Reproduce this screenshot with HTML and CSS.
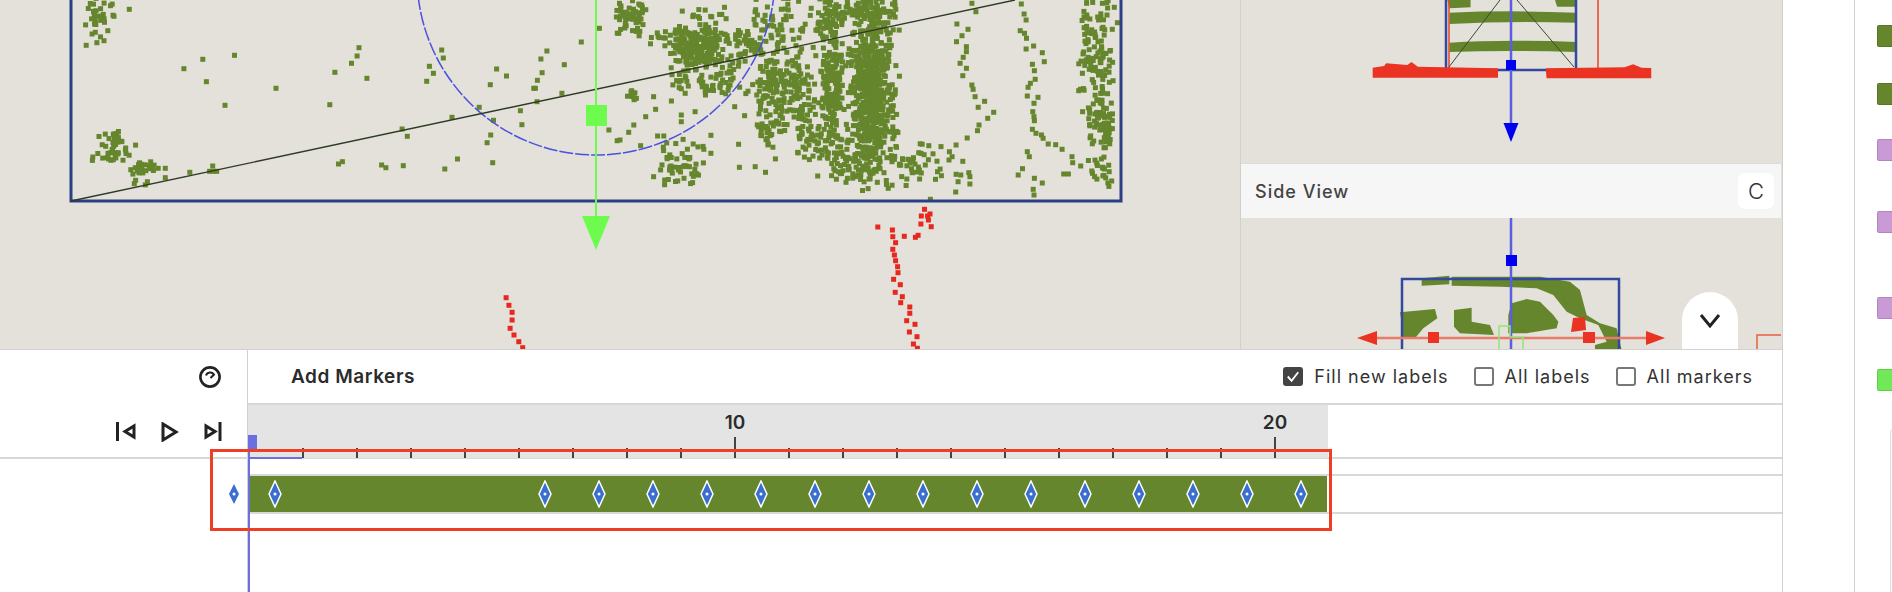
FILE: index.html
```html
<!DOCTYPE html>
<html lang="en">
<head>
  <meta charset="UTF-8" />
  <title>Label Editor</title>
  <link rel="stylesheet" href="styles.css">
</head>
<body>
  <div id="page">
    <div id="editor">
      <!-- 3D views -->
      <div id="views">
        <svg id="main-view" viewBox="0 0 1240 349" width="1240" height="349">
          <g id="main-dots"></g>
          <circle cx="596" cy="-24" r="179" fill="none" stroke="#4a50e0" stroke-width="1.5" stroke-dasharray="14 2"/>
          <rect x="71" y="-10" width="1050" height="211" fill="none" stroke="#2b3f85" stroke-width="3"/>
          <line x1="71" y1="201" x2="1015" y2="0" stroke="#2f3a24" stroke-width="1.4"/>
          <line x1="596" y1="0" x2="596" y2="218" stroke="#6dfb4e" stroke-width="2"/>
          <rect x="586" y="105" width="21" height="21" fill="#6dfb4e"/>
          <polygon points="582,216 610,216 596,250" fill="#6dfb4e"/>
        </svg>
        <div id="side-panel">
          <svg viewBox="1241 0 541 163" width="541" height="163">
            <g transform="translate(1230 0) scale(.4221 .3333)" fill="#65862c">
              <path d="M515 0H570V22L520 25ZM770 0H822V20L775 20Z"/>
              <path d="M520 38Q660 30 820 38V68Q660 62 520 72Z"/>
              <path d="M520 128Q650 118 820 126V156Q660 150 520 156Z"/>
            </g>
            <line x1="1449" y1="0" x2="1449" y2="68" stroke="#e8452c" stroke-width="1.5"/>
            <line x1="1598" y1="0" x2="1598" y2="68" stroke="#e8452c" stroke-width="1.5"/>
            <rect x="1446" y="-5" width="130" height="75" fill="none" stroke="#33489f" stroke-width="2.5"/>
            <line x1="1500" y1="0" x2="1449" y2="67" stroke="#3a4a30" stroke-width="1"/>
            <line x1="1517" y1="0" x2="1574" y2="67" stroke="#3a4a30" stroke-width="1"/>
            <g transform="translate(1230 0) scale(.4221 .3333)" fill="#ea3323">
              <path d="M338 203L365 198L370 190L420 195L430 186L445 200L635 205V233L338 233Z"/>
              <path d="M748 205L935 202L955 193L975 203L998 204V235L750 235Z"/>
            </g>
            <line x1="1511" y1="0" x2="1511" y2="125" stroke="#5a5fe0" stroke-width="2.5"/>
            <rect x="1506" y="60" width="10" height="10" fill="#0000f0"/>
            <polygon points="1503.5,123 1518.5,123 1511,142" fill="#0000f0"/>
          </svg>
          <div id="side-header">
            <span class="view-title">Side View</span>
            <span class="key-cap">C</span>
          </div>
          <svg viewBox="1241 218 541 131" width="541" height="131">
            <g transform="translate(1340 225) scale(.3333)" fill="#65862c">
              <path d="M245 160L328 152V178L245 182Z"/>
              <path d="M335 155L600 155L690 170L720 195L740 270L780 295L830 310L845 375H765V360L800 350L775 300L720 280L680 260L640 210L590 190L480 185L335 182Z"/>
              <path d="M505 270L515 235L560 222L600 230L640 270L655 290L650 310L560 325L505 325Z"/>
              <path d="M180 262L285 252L292 280L250 310L225 340L190 342L185 290Z"/>
              <path d="M342 255L395 248V290L450 300L462 330L360 325L342 305Z"/>
            </g>
            <rect x="1402" y="279" width="217" height="90" fill="none" stroke="#33489f" stroke-width="2.5"/>
            <line x1="1511" y1="218" x2="1511" y2="350" stroke="#5a5fe0" stroke-width="2.5"/>
            <rect x="1506" y="255" width="11" height="11" fill="#0000f0"/>
            <line x1="1375" y1="338" x2="1648" y2="338" stroke="#ea7a6a" stroke-width="2.5"/>
            <polygon points="1357,338 1377,331 1377,345" fill="#ea3323"/>
            <polygon points="1665,338 1646,331 1646,345" fill="#ea3323"/>
            <rect x="1428" y="332" width="11" height="11" fill="#ea3323"/>
            <rect x="1583" y="332" width="12" height="11" fill="#ea3323"/>
            <path d="M1573 318L1585 317L1586 330L1571 332Z" fill="#ea3323"/>
            <path d="M1499 326H1510V337H1523V350H1499Z" fill="none" stroke="#8fe87a" stroke-width="1.5"/>
            <path d="M1781 335H1757V350" fill="none" stroke="#e8603f" stroke-width="1.5"/>
          </svg>
          <button id="collapse-btn">
            <svg viewBox="0 0 24 16" width="24" height="16"><path d="M3 2L12 13L21 2" fill="none" stroke="#222" stroke-width="3"/></svg>
          </button>
        </div>
      </div>

      <!-- Timeline -->
      <div id="timeline">
        <div id="timeline-head">
          <div class="speed-row">
            <svg viewBox="0 0 24 24" width="24" height="24">
              <circle cx="12" cy="12" r="9.6" fill="none" stroke="#222" stroke-width="2.6"/>
              <path d="M8 10.5A4.5 4.5 0 0 1 16 9.5L12.5 13" fill="none" stroke="#222" stroke-width="2"/>
            </svg>
          </div>
          <div class="transport-row">
            <svg viewBox="0 0 20 20" width="20" height="20"><path d="M1.5 0V19" stroke="#222" stroke-width="3"/><path d="M18 4V15L9 9.500Z" fill="none" stroke="#222" stroke-width="3"/></svg>
            <svg viewBox="0 0 18 20" width="18" height="20"><path d="M2 2V18L15 10Z" fill="none" stroke="#222" stroke-width="3"/></svg>
            <svg viewBox="0 0 18 20" width="18" height="20"><path d="M2 4V15L11 9.500Z" fill="none" stroke="#222" stroke-width="3"/><path d="M16 0V19" stroke="#222" stroke-width="3"/></svg>
          </div>
        </div>
        <div id="timeline-body">
          <div id="marker-bar">
            <span class="bar-title">Add Markers</span>
            <div class="bar-options">
              <label class="opt"><span class="box checked"><svg viewBox="0 0 20 20" width="20" height="19"><path d="M4.500 10L8.500 14.500L15.500 5.500" fill="none" stroke="#fff" stroke-width="2"/></svg></span>Fill new labels</label>
              <label class="opt"><span class="box"></span>All labels</label>
              <label class="opt"><span class="box"></span>All markers</label>
            </div>
          </div>
          <div id="ruler-row"><div id="ruler"></div></div>
          <div id="track-row"><div id="track"></div></div>
        </div>
        <!-- things over the timeline -->
        <div id="playhead"></div>
        <div id="playhead-range"></div>
        <svg id="key-diamond" viewBox="0 0 10 20" width="10" height="20"><path d="M5 0L10 10L5 20L0 10Z" fill="#3a6fd0"/><circle cx="5" cy="10" r="1.500" fill="#fff"/></svg>
        <div id="red-box"></div>
      </div>
    </div>

    <div id="gutter"></div>

    <!-- Class list, cut off by the window -->
    <div id="class-list">
      <div class="swatch olive"></div>
      <div class="swatch olive gap-36"></div>
      <div class="swatch lilac gap-35"></div>
      <div class="swatch lilac gap-50"></div>
      <div class="swatch lilac gap-64"></div>
      <div class="swatch lime gap-50"></div>
      <div class="card"></div>
    </div>
  </div>
  <script src="scene.js"></script>
</body>
</html>
```

FILE: styles.css
```css
html, body {
  margin: 0;
  height: 100%;
  overflow: hidden;
  background: #fff;
  font-family: 'Inter', 'Lato', sans-serif;
  color: #2b2b2b;
}

#page {
  display: flex;
  width: 1892px;
  height: 592px;
  overflow: hidden;
}

#editor {
  width: 1782px;
  display: flex;
  flex-direction: column;
  flex: none;
}

#views {
  display: flex;
  height: 350px;
  background: #e3e1da;
  border-bottom: 1px solid #d2d2d0;
  box-sizing: border-box;
}

#views svg {
  display: block;
}

#main-view {
  flex: none;
}

#side-panel {
  position: relative;
  width: 541px;
  flex: none;
  border-left: 1px solid #d2d0ca;
  box-sizing: border-box;
  overflow: hidden;
}

#side-header {
  height: 55px;
  box-sizing: border-box;
  padding: 0 7px 0 14px;
  background: #f6f6f6;
  border-top: 1px solid #dddcd8;
  display: flex;
  align-items: center;
  justify-content: space-between;
}

.view-title {
  font-size: 18px;
  font-weight: 500;
  letter-spacing: 1px;
  color: #444;
}

.key-cap {
  width: 36px;
  height: 36px;
  background: #fff;
  border-radius: 7px;
  display: flex;
  align-items: center;
  justify-content: center;
  font-size: 22px;
  font-weight: 300;
  color: #333;
}

#collapse-btn {
  position: absolute;
  left: 441px;
  bottom: 0;
  width: 56px;
  height: 57px;
  padding: 0;
  border: none;
  background: #fff;
  border-radius: 28px 28px 0 0;
  display: flex;
  align-items: center;
  justify-content: center;
}

#timeline {
  position: relative;
  flex: 1;
  display: flex;
}

#timeline-head {
  width: 248px;
  box-sizing: border-box;
  flex: none;
  border-right: 1px solid #d0d0d0;
}

.speed-row {
  height: 54px;
  box-sizing: border-box;
  padding: 15px 25px 0 0;
  display: flex;
  justify-content: flex-end;
}

.transport-row {
  height: 55px;
  box-sizing: border-box;
  padding: 18px 26px 0 0;
  display: flex;
  justify-content: flex-end;
  gap: 27px;
  border-bottom: 2px solid #d8d8d8;
  margin-right: -1px;
}

.transport-row svg:first-child {
  margin-right: -2px;
}

.transport-row svg:last-child {
  margin-left: -2px;
}

#timeline-body {
  flex: 1;
  display: flex;
  flex-direction: column;
}

#marker-bar {
  height: 55px;
  box-sizing: border-box;
  padding: 0 29px 0 43px;
  display: flex;
  align-items: center;
  justify-content: space-between;
  border-bottom: 2px solid #d8d8d8;
}

.bar-title {
  font-size: 19px;
  font-weight: 600;
  letter-spacing: 0.55px;
  color: #2b2b2b;
}

.bar-options {
  display: flex;
  gap: 25px;
}

.opt {
  display: flex;
  align-items: center;
  gap: 11px;
  font-size: 18px;
  font-weight: 400;
  letter-spacing: 1px;
  color: #333;
}

.box {
  width: 20px;
  height: 19px;
  box-sizing: border-box;
  border: 2px solid #777;
  border-radius: 3px;
  display: block;
}

.box.checked {
  background: #444;
  border: none;
}

.box svg {
  display: block;
}

#ruler-row {
  height: 54px;
  box-sizing: border-box;
  border-bottom: 2px solid #d8d8d8;
}

#ruler {
  width: 1080px;
  height: 53px;
  background: #e4e4e4;
  display: flex;
  align-items: flex-end;
  padding-left: 54px;
  box-sizing: border-box;
}

.tick {
  width: 54px;
  height: 10px;
  flex: none;
  position: relative;
  border-left: 2px solid #444;
  box-sizing: border-box;
}

.tick.major {
  height: 21px;
}

.tick-label {
  position: absolute;
  left: -15px;
  bottom: 24px;
  width: 28px;
  text-align: center;
  font-size: 19px;
  font-weight: 600;
  color: #2b2b2b;
}

#track-row {
  margin-top: 15px;
  height: 40px;
  box-sizing: border-box;
  border-top: 2px solid #d8d8d8;
  border-bottom: 2px solid #d8d8d8;
}

#track {
  width: 1078px;
  height: 36px;
  margin-left: 1px;
  background: #65862c;
  display: flex;
  align-items: center;
}

.marker {
  display: block;
  flex: none;
  margin-left: 40px;
}

.marker:nth-child(1) {
  margin-left: 19px;
}

.marker:nth-child(2) {
  margin-left: 256px;
}

#playhead {
  position: absolute;
  left: 248px;
  top: 85px;
  bottom: 0;
  width: 10px;
  background: linear-gradient(#6b6fe0, #6b6fe0) 0 0 / 9px 17px no-repeat,
              linear-gradient(#6b6fe0, #6b6fe0) 0 0 / 2px 100% no-repeat;
}

#playhead-range {
  position: absolute;
  left: 248px;
  top: 107px;
  width: 54px;
  height: 2px;
  background: #6b6fe0;
}

#key-diamond {
  position: absolute;
  left: 229px;
  top: 134px;
}

#red-box {
  position: absolute;
  left: 210px;
  top: 99px;
  width: 1122px;
  height: 82px;
  box-sizing: border-box;
  border: 3px solid #ee3f25;
}

#gutter {
  width: 73px;
  flex: none;
  border-left: 1px solid #d0d0d0;
  border-right: 1px solid #d0d0d0;
  box-sizing: border-box;
  height: 100%;
}

#class-list {
  flex: 1;
  position: relative;
  padding: 25px 0 0 22px;
  overflow: hidden;
}

.swatch {
  width: 22px;
  height: 22px;
  border-radius: 2px;
  box-sizing: border-box;
  border: 1px solid rgba(0, 0, 0, 0.12);
}

.swatch.olive { background: #65862c; }
.swatch.lilac { background: #c99ad6; }
.swatch.lime { background: #70e858; }

.gap-36 { margin-top: 36px; }
.gap-35 { margin-top: 34px; }
.gap-50 { margin-top: 50px; }
.gap-64 { margin-top: 64px; }

.card {
  position: absolute;
  left: 35px;
  top: 427px;
  width: 40px;
  height: 200px;
  border: 1px solid #ddd;
  border-radius: 6px;
}
```

FILE: scene.js
```js
const NS = 'http://www.w3.org/2000/svg';

// small seeded random so the cloud is the same every time
let seed = 12345;
function rnd() {
  seed = (seed * 16807) % 2147483647;
  return seed / 2147483647;
}

// softer edges than a plain rnd(), clusters should not look like boxes
function soft() {
  return (rnd() + rnd()) * 0.7 - 0.2;
}

const dotLayer = document.getElementById('main-dots');

function dot(x, y, color) {
  const r = document.createElementNS(NS, 'rect');
  r.setAttribute('x', (x - 2.5).toFixed(1));
  r.setAttribute('y', (y - 2.5).toFixed(1));
  r.setAttribute('width', 5);
  r.setAttribute('height', 5);
  r.setAttribute('fill', color);
  dotLayer.appendChild(r);
}

// coordinates below were read off crops: x is scaled 2.529, y is scaled 3
const OLIVE = '#65862c';
const RED = '#e6281e';
const leftPt = (p, c) => dot(p[0] / 2.529, p[1] / 3, c);
const rightPt = (p, c) => dot(620 + p[0] / 2.529, p[1] / 3, c);

const leftDots = [
  [327,28],[218,136],[245,128],[263,122],[241,97],[465,206],[513,178],[593,166],[522,245],[569,316],[698,265],
  [908,143],[903,168],[889,190],[847,217],[928,235],[834,314],[1117,150],[1121,174],[1086,199],[1096,220],[1079,244],
  [1256,207],[1281,228],[1240,254],[1383,153],[1368,177],[1371,218],[1359,241],[1350,265],[1354,265],[1427,194],
  [1470,126],[1516,85],[1421,280],[1358,305],[1316,332],[1320,374],[1212,322],[1248,361],[1143,352],[1017,387],
  [1030,409],[1241,405],[1232,428],[1157,477],[1125,507],[1246,488],[1020,497],[965,495],[976,503],[856,492],[866,485],
  [1540,390],[1561,422],[538,498],[540,514],[530,514],[548,514],[480,517],[418,505],[418,533],[400,505],[343,541],
  [1570,25],[1565,100]
];

const leftClusters = [
  [225,280,0,100,30],
  [240,330,405,490,45],
  [335,385,480,545,26]
];

const rightDots = [
  [890,10],[900,35],[852,72],[880,88],[865,107],[851,125],[876,140],[876,155],[868,172],[860,190],[876,205],[867,227],
  [890,255],[893,268],[898,290],[922,304],[906,322],[945,337],[930,355],[908,375],[904,392],[878,414],[850,435],[833,455],
  [840,470],[832,480],[867,484],[850,523],[862,525],[882,518],[885,530],[855,545],[885,552],[849,576],
  [1015,12],[1022,42],[1027,60],[1012,92],[1023,100],[1028,115],[1027,147],[1046,138],[1068,158],[1073,185],[1043,193],
  [1048,212],[1050,238],[1038,250],[1032,262],[1030,288],[1057,292],[1047,310],[1044,335],[1047,350],[1048,362],[1043,388],
  [1052,400],[1066,405],[1070,415],[1083,432],[1102,434],[1118,448],[1030,455],[1035,470],[1018,506],[1007,525],[1048,535],
  [1068,549],[1045,568],[1047,585],[1143,470],[1145,488],[1165,498],[1122,522],[1134,522],[785,598],
  [85,530],[113,540],[300,433],[230,406],[230,460],[302,502],[342,500],[368,517],[500,528],[575,535],[595,530],[655,505],
  [185,432],[290,320],[315,347],[190,335],[155,345],[155,365],[90,328],[65,350],[35,375],[22,397],[0,420],[52,437],[95,408],
  [85,290],[130,303],[165,280],[1247,242],[1245,88],[1258,68],[1250,22],[1170,335],[1160,272]
];

const rightClusters = [
  [130,260,80,190,140],
  [160,240,90,180,70],
  [150,340,190,280,70],
  [0,60,0,100,50],
  [60,130,90,130,8],
  [260,380,90,170,45],
  [340,480,0,130,50],
  [150,280,0,70,14],
  [360,430,170,320,60],
  [340,430,130,450,60],
  [430,470,150,340,40],
  [430,520,100,470,55],
  [340,400,310,420,22],
  [450,520,330,470,40],
  [500,560,0,100,45],
  [510,570,0,450,60],
  [515,560,100,450,120],
  [540,690,0,60,60],
  [590,690,0,540,170],
  [590,690,60,500,360],
  [600,650,100,500,190],
  [530,600,390,540,40],
  [680,800,430,550,40],
  [100,200,430,550,50],
  [18,42,262,300,10],
  [1165,1200,0,280,50],
  [1200,1240,0,280,55],
  [1190,1240,280,480,60],
  [1185,1240,480,555,18],
  [1225,1245,335,425,18]
];

const redRight = [
  [652,681],[689,690],[690,710],[719,709],[747,712],[754,706],[761,672],[787,680],[762,648],[778,648],[784,642],[780,660],
  [770,628],[697,728],[690,748],[694,765],[697,782],[702,800],[703,818],[692,838],[709,854],[696,877],[714,890],[710,908],
  [733,921],[733,940],[725,962],[746,973],[732,996],[751,1010],[742,1032],[752,1045]
];

const redLeft = [[1280,893],[1287,916],[1295,937],[1295,960],[1290,985],[1300,1005],[1312,1025],[1322,1043]];

function spread(list, place) {
  list.forEach(c => {
    for (let i = 0; i < c[4]; i++) {
      // keep each cluster inside the box (its bottom edge is y 598 in crop units)
      const x = c[0] + soft() * (c[1] - c[0]);
      const y = c[2] + soft() * (c[3] - c[2]);
      if (y < 590) place([x, y], OLIVE);
    }
  });
}

leftDots.forEach(p => leftPt(p, OLIVE));
spread(leftClusters, leftPt);
rightDots.forEach(p => rightPt(p, OLIVE));
spread(rightClusters, rightPt);
redRight.forEach(p => rightPt(p, RED));
redLeft.forEach(p => leftPt(p, RED));

// ruler: ticks every 54px, labelled at 10 and 20
const ruler = document.getElementById('ruler');
for (let i = 2; i <= 20; i++) {
  const tick = document.createElement('div');
  tick.className = 'tick';
  if (i % 10 === 0) {
    tick.classList.add('major');
    const label = document.createElement('span');
    label.className = 'tick-label';
    label.textContent = i;
    tick.appendChild(label);
  }
  ruler.appendChild(tick);
}

// keyframes on the track
const track = document.getElementById('track');
for (let i = 0; i < 16; i++) {
  const m = document.createElementNS(NS, 'svg');
  m.setAttribute('class', 'marker');
  m.setAttribute('viewBox', '0 0 14 28');
  m.setAttribute('width', 14);
  m.setAttribute('height', 28);
  m.innerHTML = '<path d="M7 1L13 14L7 27L1 14Z" fill="#3a6fd0" stroke="#fff" stroke-width="1.5"/><circle cx="7" cy="14" r="1.5" fill="#fff"/>';
  track.appendChild(m);
}
```
